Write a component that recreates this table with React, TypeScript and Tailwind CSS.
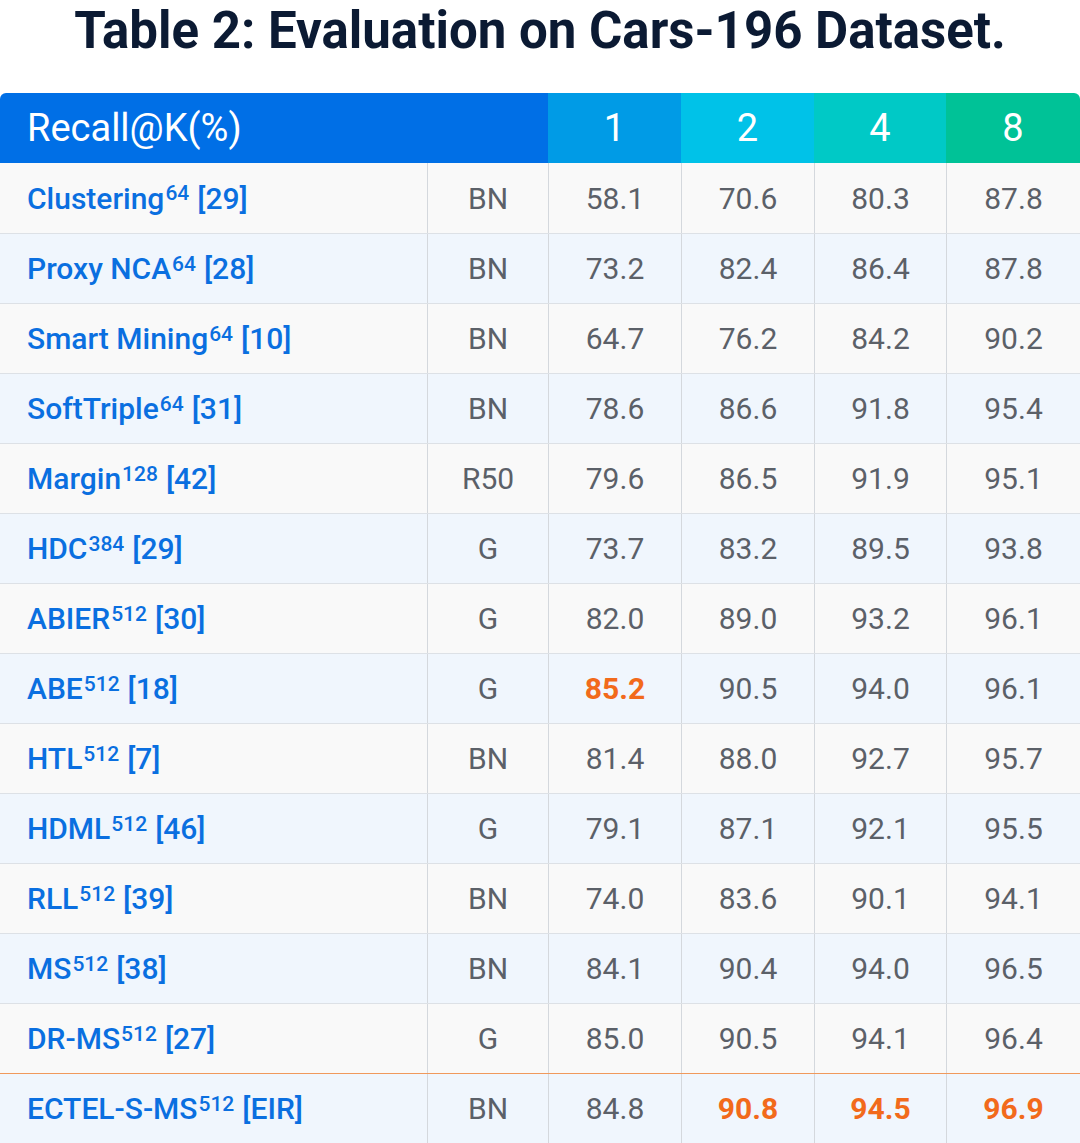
const rows: { name: string; sup: string; ref: string; bb: string; vals: string[]; hi: number[] }[] = [
  { name: 'Clustering', sup: '64', ref: '[29]', bb: 'BN', vals: ['58.1', '70.6', '80.3', '87.8'], hi: [] },
  { name: 'Proxy NCA', sup: '64', ref: '[28]', bb: 'BN', vals: ['73.2', '82.4', '86.4', '87.8'], hi: [] },
  { name: 'Smart Mining', sup: '64', ref: '[10]', bb: 'BN', vals: ['64.7', '76.2', '84.2', '90.2'], hi: [] },
  { name: 'SoftTriple', sup: '64', ref: '[31]', bb: 'BN', vals: ['78.6', '86.6', '91.8', '95.4'], hi: [] },
  { name: 'Margin', sup: '128', ref: '[42]', bb: 'R50', vals: ['79.6', '86.5', '91.9', '95.1'], hi: [] },
  { name: 'HDC', sup: '384', ref: '[29]', bb: 'G', vals: ['73.7', '83.2', '89.5', '93.8'], hi: [] },
  { name: 'ABIER', sup: '512', ref: '[30]', bb: 'G', vals: ['82.0', '89.0', '93.2', '96.1'], hi: [] },
  { name: 'ABE', sup: '512', ref: '[18]', bb: 'G', vals: ['85.2', '90.5', '94.0', '96.1'], hi: [0] },
  { name: 'HTL', sup: '512', ref: '[7]', bb: 'BN', vals: ['81.4', '88.0', '92.7', '95.7'], hi: [] },
  { name: 'HDML', sup: '512', ref: '[46]', bb: 'G', vals: ['79.1', '87.1', '92.1', '95.5'], hi: [] },
  { name: 'RLL', sup: '512', ref: '[39]', bb: 'BN', vals: ['74.0', '83.6', '90.1', '94.1'], hi: [] },
  { name: 'MS', sup: '512', ref: '[38]', bb: 'BN', vals: ['84.1', '90.4', '94.0', '96.5'], hi: [] },
  { name: 'DR-MS', sup: '512', ref: '[27]', bb: 'G', vals: ['85.0', '90.5', '94.1', '96.4'], hi: [] },
  { name: 'ECTEL-S-MS', sup: '512', ref: '[EIR]', bb: 'BN', vals: ['84.8', '90.8', '94.5', '96.9'], hi: [1, 2, 3] },
];

const cols = 'grid grid-cols-[427px_121px_133px_133px_132px_134px]';

function Row({ r, i }: { r: (typeof rows)[number]; i: number }) {
  const bg = i % 2 === 0 ? 'bg-[#f9f9f9]' : 'bg-[#f0f6fd]';
  const h = i === 0 ? 'h-[70px]' : 'h-[69px]';
  return (
    <div className={`${cols} ${h} ${bg}`}>
      <div className="flex items-center pl-[27px] text-[#0a6fe0] text-[30px] font-medium whitespace-nowrap">
        {r.name}
        <span className="text-[21px] relative -top-[4px] ml-[1px]">{r.sup}</span>
        <span className="ml-[8px]">{r.ref}</span>
      </div>
      <div className="border-l border-[#d4d8dd] flex items-center justify-center text-[30px] text-[#5b6068]">
        {r.bb}
      </div>
      {r.vals.map((v, j) => (
        <div
          key={j}
          className={`border-l border-[#d4d8dd] flex items-center justify-center text-[30px] ${
            r.hi.includes(j) ? 'text-[#f26a1b] font-bold' : 'text-[#5b6068]'
          }`}
        >
          {v}
        </div>
      ))}
    </div>
  );
}

export default function App() {
  return (
    <div className="w-[1080px] h-[1143px] overflow-hidden bg-white font-['Roboto',sans-serif]">
      {/* title */}
      <div className="h-[93px] flex justify-center pt-[2px]">
        <h1 className="text-[51px] leading-[58px] font-bold text-[#0b1a33] whitespace-nowrap">
          Table 2: Evaluation on Cars-196 Dataset.
        </h1>
      </div>

      {/* header */}
      <div className={`${cols} h-[70px] rounded-t-[6px] overflow-hidden text-white text-[38px]`}>
        <div className="col-span-2 bg-[#006fe6] flex items-center pl-[27px]">Recall@K(%)</div>
        <div className="bg-[#009be6] flex items-center justify-center">1</div>
        <div className="bg-[#00c2e8] flex items-center justify-center">2</div>
        <div className="bg-[#00c9c6] flex items-center justify-center">4</div>
        <div className="bg-[#00c297] flex items-center justify-center">8</div>
      </div>

      {/* body */}
      <div className="flex flex-col">
        {rows.map((r, i) => (
          <div key={i}>
            {i > 0 && (
              <div className={i === rows.length - 1 ? 'h-px bg-[#f0995c]' : 'h-px bg-[#dde1e6]'} />
            )}
            <Row r={r} i={i} />
          </div>
        ))}
      </div>
    </div>
  );
}
